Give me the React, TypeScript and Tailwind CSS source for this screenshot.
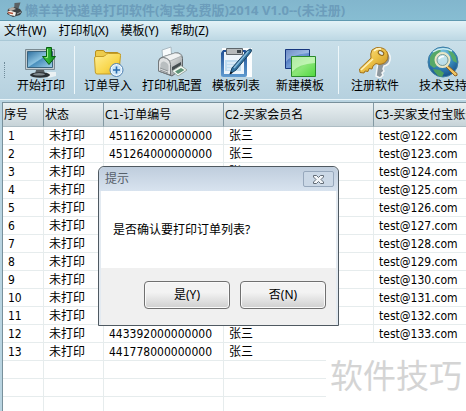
import { ReactNode } from "react"
import clsx from "clsx"

const menus = ["文件(W)", "打印机(X)", "模板(Y)", "帮助(Z)"]

const columns = ["序号", "状态", "C1-订单编号", "C2-买家会员名", "C3-买家支付宝账号"]

const orders = [
  "451162000000000",
  "451264000000000",
  "451301000000000",
  "451347000000000",
  "451398000000000",
  "451420000000000",
  "451466000000000",
  "451513000000000",
  "451572000000000",
  "451608000000000",
  "451655000000000",
  "443392000000000",
  "441778000000000",
].map((code, i) => ({
  id: i + 1,
  status: "未打印",
  code,
  buyer: "张三",
  account: `test@${i < 12 ? 122 + i : 134}.com`,
}))

function TitleIcon() {
  return (
    <svg className="h-4 w-4 shrink-0" viewBox="0 0 16 16" aria-hidden="true">
      <path d="M8.500 1l6-.5-2 6-4.500 2z" fill="#5b6164" />
      <path d="M2 7l6-2 6 2 2 3-2 3-7 2-6-3z" fill="#3c4144" />
      <path d="M2 7l5-2 3 2-5 2z" fill="#b3aca4" />
      <path d="M1 10l3-1.500 6 2-1 3.500-5-1z" fill="#f4f1ec" />
      <path d="M2 10.500l5 1" stroke="#b5533b" strokeWidth="1.500" />
      <path d="M11 12l4-2" stroke="#9aa1a4" />
    </svg>
  )
}

function ScreenIcon() {
  return (
    <svg className="h-8 w-8" viewBox="0 0 32 32" aria-hidden="true">
      <defs>
        <linearGradient id="screen" x1="0" y1="0" x2="1" y2="1">
          <stop offset="0" stopColor="#2f6f9f" />
          <stop offset="0.48" stopColor="#8cc3e0" />
          <stop offset="0.52" stopColor="#4a90bd" />
          <stop offset="1" stopColor="#a2d2ea" />
        </linearGradient>
        <linearGradient id="arrow" x1="0" y1="0" x2="1" y2="0">
          <stop offset="0" stopColor="#4ccf46" />
          <stop offset="1" stopColor="#0b8a1b" />
        </linearGradient>
      </defs>
      <path d="M22 26h9v4l-8 2z" fill="#eaf1f3" />
      <path d="M0.500 3.500h29v20h-29z" fill="#c3ccd0" stroke="#7a8a92" />
      <path d="M2.500 5.500h25v16h-25z" fill="url(#screen)" stroke="#3a647f" />
      <path d="M11 24h8l1 4h-10z" fill="#565d61" />
      <ellipse cx="15" cy="29" rx="10" ry="2.800" fill="#2a3034" />
      <ellipse cx="14" cy="28.300" rx="6" ry="1.200" fill="#828b90" />
      <path
        d="M21.500 1.500h5v9h4l-6.500 8-6.500-8h4z"
        fill="url(#arrow)"
        stroke="#07610f"
        strokeLinejoin="round"
      />
      <path d="M22.500 3v8.500h-2" stroke="#9df08f" fill="none" />
    </svg>
  )
}

function FolderIcon() {
  return (
    <svg className="h-8 w-8" viewBox="0 0 32 32" aria-hidden="true">
      <defs>
        <linearGradient id="folder" x1="0" y1="0" x2="1" y2="1">
          <stop offset="0" stopColor="#fff09a" />
          <stop offset="0.6" stopColor="#f8d64c" />
          <stop offset="1" stopColor="#dfae20" />
        </linearGradient>
      </defs>
      <path d="M3.500 24V6q0-1.500 1.500-1.500h6q1.500 0 2 2H25q2 0 2 2V25z" fill="#edcb4c" stroke="#b8901f" />
      <path d="M2.500 12q0-1.500 1.500-1.500h7q1.500 0 2.500-1.500t3-1.500h10.500q2 0 1.500 2L27 26q-.3 2-2 2H5q-1.500 0-1.700-2z" fill="url(#folder)" stroke="#c59d26" />
      <circle cx="24.500" cy="24" r="6.500" fill="#f4f9fd" stroke="#4c80b2" />
      <circle cx="24.500" cy="24" r="5" fill="#cbe5f8" />
      <path d="M24.500 20.500v7M21 24h7" stroke="#2a6bad" strokeWidth="1.600" />
    </svg>
  )
}

function PrinterIcon() {
  return (
    <svg className="h-8 w-8" viewBox="0 0 32 32" aria-hidden="true">
      <defs>
        <linearGradient id="printer" x1="0" y1="0" x2="1" y2="1">
          <stop offset="0" stopColor="#fbfbfb" />
          <stop offset="0.5" stopColor="#c9cccd" />
          <stop offset="1" stopColor="#82888b" />
        </linearGradient>
      </defs>
      <path d="M6 4l9-3 1 14H7z" fill="#f8fbfc" stroke="#a9b9c2" />
      <path d="M2.500 16q0-4 4-5L19 7q7-1 7.500 5.500V22L16 30 2.500 25z" fill="url(#printer)" stroke="#5f6568" />
      <path d="M6.500 11L19 7q5-.5 6.500 3L14 15q-3-3-7.500-4z" fill="#f1f2f2" stroke="#9aa0a3" strokeWidth="0.700" />
      <path d="M2.500 16q1-4.500 5-4.500 6.500 1 7 7V29L2.500 25z" fill="#dfe1e2" stroke="#73797c" />
      <path d="M4.500 18q1-3 3.500-2.500 4 1 4.500 4.500v5l-8-3z" fill="#b9bec0" />
      <path d="M16 21l9-5v3l-9 6z" fill="#454c50" />
      <path d="M16 25l9-5.500L31 24l-9 6z" fill="#f5f9f4" stroke="#7b8b84" strokeWidth="0.700" />
      <path d="M19 25.500l6-3.500 3.500 2-6.500 4z" fill="#5f9478" />
      <path d="M4 22l8 3M4 24l8 3" stroke="#8d9396" />
    </svg>
  )
}

function ClipboardIcon() {
  return (
    <svg className="h-8 w-8" viewBox="0 0 32 32" aria-hidden="true">
      <defs>
        <linearGradient id="board" x1="0" y1="0" x2="0" y2="1">
          <stop offset="0" stopColor="#1f4f94" />
          <stop offset="1" stopColor="#5f9bd0" />
        </linearGradient>
      </defs>
      <path d="M2 2h30v29H2z" fill="#fbfdfe" />
      <path d="M3 4h22q2 0 2 2v23q0 2-2 2H3q-2 0-2-2V7z" fill="url(#board)" />
      <path d="M4 6h20v22H4z" fill="#edf5fb" />
      <path d="M5 14h16v11H5z" fill="#bedcf0" />
      <path d="M7 17h9M7 20h7M7 23h10" stroke="#f6fafd" />
      <path d="M6.500 2.500h16v6h-16z" fill="#b6babc" stroke="#5e666b" />
      <path d="M17 4h4v3h-4z" fill="#3f474c" />
      <path d="M30 3q2.500 0 1 3L16 24l-6 4 2-6L27 5z" fill="#33739f" stroke="#17405f" />
      <path d="M28.500 5L14 22" stroke="#86bbdc" strokeWidth="1.500" />
      <path d="M9.500 28.500l1.500-3 1.500 1.500z" fill="#111" />
    </svg>
  )
}

function TemplateIcon() {
  return (
    <svg className="h-8 w-8" viewBox="0 0 32 32" aria-hidden="true">
      <defs>
        <linearGradient id="blue" x1="0" y1="0" x2="1" y2="1">
          <stop offset="0" stopColor="#1b459d" />
          <stop offset="0.5" stopColor="#6f98d4" />
          <stop offset="1" stopColor="#3562b6" />
        </linearGradient>
        <linearGradient id="green" x1="0" y1="0" x2="1" y2="1">
          <stop offset="0" stopColor="#5fcd52" />
          <stop offset="0.5" stopColor="#8be678" />
          <stop offset="1" stopColor="#4fd83f" />
        </linearGradient>
      </defs>
      <path d="M1.500 3.500h24v19h-24z" fill="url(#blue)" stroke="#17377f" />
      <path d="M2 16Q6 9 25 7v-3H2z" fill="#d3e3f7" opacity="0.450" />
      <path d="M7.500 10.500h24v20h-24z" fill="url(#green)" stroke="#2a8a2c" />
      <path d="M8 11h23v6q-17 1-23 9z" fill="#e2ffd8" opacity="0.600" />
    </svg>
  )
}

function KeysIcon() {
  return (
    <svg className="h-8 w-8" viewBox="0 0 32 32" aria-hidden="true">
      <defs>
        <linearGradient id="gold" x1="0" y1="0" x2="1" y2="1">
          <stop offset="0" stopColor="#ffe893" />
          <stop offset="0.5" stopColor="#ecc146" />
          <stop offset="1" stopColor="#bb8318" />
        </linearGradient>
      </defs>
      <path
        d="M27 5q5 3 4 9-1 5-6 6l-1 3 1 2-2 2 1 2-3 3-4-2 2-14z"
        fill="#8f989e"
        stroke="#f3f6f7"
        strokeWidth="1.500"
      />
      <path
        d="M13 4q4-4 10-2 6 2 6 8t-6 8q-3 1-6-.5l-3 2.500-1 3-3-.5-1 3-3-.5-1 2-4-.5-.5-3.500L12 12q-1-4 1-8z"
        fill="url(#gold)"
        stroke="#a3731c"
      />
      <path d="M2 24l12-11" stroke="#fff2bd" strokeWidth="1.500" />
      <path d="M15 5q3-3 7-2" stroke="#fff6cf" strokeWidth="1.500" fill="none" />
      <ellipse cx="22" cy="7" rx="3" ry="2" fill="#dce8ed" stroke="#8c6115" transform="rotate(30 22 7)" />
    </svg>
  )
}

function SupportIcon() {
  return (
    <svg className="h-8 w-8" viewBox="0 0 32 32" aria-hidden="true">
      <defs>
        <radialGradient id="globe" cx="0.45" cy="0.25" r="0.75">
          <stop offset="0" stopColor="#8fd3e6" />
          <stop offset="0.5" stopColor="#3a8fbe" />
          <stop offset="1" stopColor="#174f8a" />
        </radialGradient>
      </defs>
      <circle cx="16" cy="16" r="15" fill="url(#globe)" stroke="#3c7da5" />
      <path d="M3 11q3-6 9-8l2 2-4 4-2 6 2 5-3 2-4-3zM20 3q6 2 9 8l1 6-4-2-3-7z" fill="#56a867" />
      <path d="M6 23l7 1 4 3-2 4q-6-1-9-8z" fill="#4d9f5e" />
      <path d="M6 6q9-6 19-1" stroke="#cbecf2" strokeWidth="1.500" fill="none" />
      <path d="M19 18l11 9.500q1 2.500-2 2.500L18 20z" fill="#efc563" stroke="#8d6128" />
      <circle cx="15.500" cy="14" r="7" fill="#cfeaf0" fillOpacity="0.850" stroke="#e9e6c4" strokeWidth="2" />
      <circle cx="15.500" cy="14" r="5.500" fill="none" stroke="#7d9c92" />
      <path d="M12 13q1.500-3 5-2.500" stroke="#fff" strokeWidth="1.500" fill="none" />
    </svg>
  )
}

function ToolButton({ icon, label, wide }: { icon: ReactNode; label: string; wide?: boolean }) {
  return (
    <button type="button" className={clsx("flex shrink-0 flex-col items-center", wide ? "w-[68px]" : "w-16")}>
      {icon}
      <span className="text-xs leading-4 whitespace-nowrap">{label}</span>
    </button>
  )
}

function Separator({ className }: { className: string }) {
  return <div className={clsx("h-12 w-px shrink-0 bg-[#eef7fa]", className)} />
}

function DialogButton({ children }: { children: ReactNode }) {
  return (
    <button
      type="button"
      className="h-7 w-[86px] rounded-sm border border-[#707070] bg-linear-to-b from-[#f3f3f3] from-40% to-[#cfcfcf] inset-shadow-[0_0_0_1px_#fafafa]"
    >
      {children}
    </button>
  )
}

function ConfirmDialog() {
  return (
    <div
      role="dialog"
      aria-labelledby="dialog-title"
      className="absolute top-[166px] left-[98px] w-[241px] rounded-t-md border border-[#4f5961] bg-[#e3eaf1] font-['Noto_Sans','Noto_Sans_CJK_SC',sans-serif]"
    >
      <div className="flex h-6 items-center justify-between rounded-t-md bg-linear-to-b from-[#bfcddd] to-[#d8e3ef] pr-1 pl-1.5">
        <h2 id="dialog-title" className="text-xs text-[#56606a]">
          提示
        </h2>
        <button
          type="button"
          aria-label="关闭"
          className="flex h-4 w-[31px] items-center justify-center rounded-xs border border-[#97a8bc] bg-[#cbd8e6]"
        >
          <svg className="h-[9px] w-[11px]" viewBox="0 0 11 9" aria-hidden="true">
            <path
              d="M.5.500h3l2 2 2-2h3v1.500L8 4.500l2.500 2.500v1.500h-3l-2-2-2 2h-3V7L3 4.500.500 2z"
              fill="#f4f7fa"
              stroke="#626c76"
            />
          </svg>
        </button>
      </div>
      <div className="mx-0.5">
        <p className="flex h-[77px] items-center bg-white px-3 text-xs">是否确认要打印订单列表?</p>
        <div className="flex justify-end gap-2.5 bg-[#f0f0f0] px-2.5 pt-[13px] pb-4 text-xs">
          <DialogButton>是(Y)</DialogButton>
          <DialogButton>否(N)</DialogButton>
        </div>
      </div>
    </div>
  )
}

export default function App() {
  return (
    <div className="relative flex h-screen flex-col overflow-hidden bg-[#b9d4e1] font-['DejaVu_Sans_Condensed','Noto_Sans_CJK_SC',sans-serif] text-black">
      {/* Title bar */}
      <header className="flex h-[21px] shrink-0 items-center gap-[3px] border-b border-[#5f99b0] bg-linear-to-b from-[#82b6cd] to-[#87bdd2] pl-1.5">
        <TitleIcon />
        <h1 className="text-[13px] leading-4 font-bold whitespace-nowrap text-[#6c9dbb] font-['Noto_Sans','Noto_Sans_CJK_SC',sans-serif]">
          懒羊羊快递单打印软件(淘宝免费版)2014 V1.0--(未注册)
        </h1>
      </header>

      {/* Menu */}
      <nav className="flex h-[19px] shrink-0 items-center gap-3 bg-linear-to-b from-[#e3f2f7] to-[#bdd8e4] pl-1 font-['Noto_Sans','Noto_Sans_CJK_SC',sans-serif] text-xs">
        {menus.map((menu) => (
          <button key={menu} type="button" className="whitespace-nowrap">
            {menu}
          </button>
        ))}
      </nav>

      {/* Toolbar */}
      <div className="flex h-[60px] shrink-0 items-center overflow-hidden border-t border-b border-t-[#a9c8d6] border-b-[#eaf5f9] bg-linear-to-b from-[#c9dfe9] to-[#b6d1df] pl-1">
        <div className="mr-1 h-4 w-px shrink-0 border-l border-dotted border-[#6f8b99]" />
        <ToolButton icon={<ScreenIcon />} label="开始打印" />
        <Separator className="mx-px" />
        <ToolButton icon={<FolderIcon />} label="订单导入" />
        <ToolButton icon={<PrinterIcon />} label="打印机配置" />
        <ToolButton icon={<ClipboardIcon />} label="模板列表" />
        <ToolButton icon={<TemplateIcon />} label="新建模板" />
        <Separator className="mr-0.5 ml-1.5" />
        <ToolButton icon={<KeysIcon />} label="注册软件" wide />
        <ToolButton icon={<SupportIcon />} label="技术支持" wide />
      </div>

      {/* Orders */}
      <main className="mt-0.5 ml-0.5 min-h-0 flex-1 overflow-hidden border-t border-l border-[#78909b] bg-white">
        <table className="w-full min-w-[480px] table-fixed border-separate border-spacing-0 text-xs">
          <colgroup>
            <col className="w-[41px]" />
            <col className="w-[60px]" />
            <col className="w-[120px]" />
            <col className="w-[150px]" />
            <col />
          </colgroup>
          <thead>
            <tr className="h-6 bg-linear-to-b from-[#e9f0f2] to-[#c6d2d7]">
              {columns.map((column) => (
                <th
                  key={column}
                  scope="col"
                  className="border-r border-b border-r-[#8399a3] border-b-[#aebdc4] p-0 pl-px text-left font-normal whitespace-nowrap"
                >
                  {column}
                </th>
              ))}
            </tr>
          </thead>
          <tbody>
            {orders.map((order) => (
              <tr key={order.id} className="h-[18px] *:border-r *:border-b *:border-[#e6eced] *:p-0 *:pl-[5px] *:leading-4">
                <td>{order.id}</td>
                <td>{order.status}</td>
                <td>{order.code}</td>
                <td>{order.buyer}</td>
                <td>{order.account}</td>
              </tr>
            ))}
            {[1, 2, 3].map((row) => (
              <tr key={row} className="h-[18px] *:border-r *:border-b *:border-[#e6eced]">
                <td />
                <td />
                <td />
                <td />
                <td />
              </tr>
            ))}
          </tbody>
        </table>
      </main>

      <div className="absolute right-0 bottom-0 flex h-[68px] w-[140px] items-center justify-center bg-white text-[33px] text-[#d4d4d4]">
        软件技巧
      </div>

      <ConfirmDialog />
    </div>
  )
}
